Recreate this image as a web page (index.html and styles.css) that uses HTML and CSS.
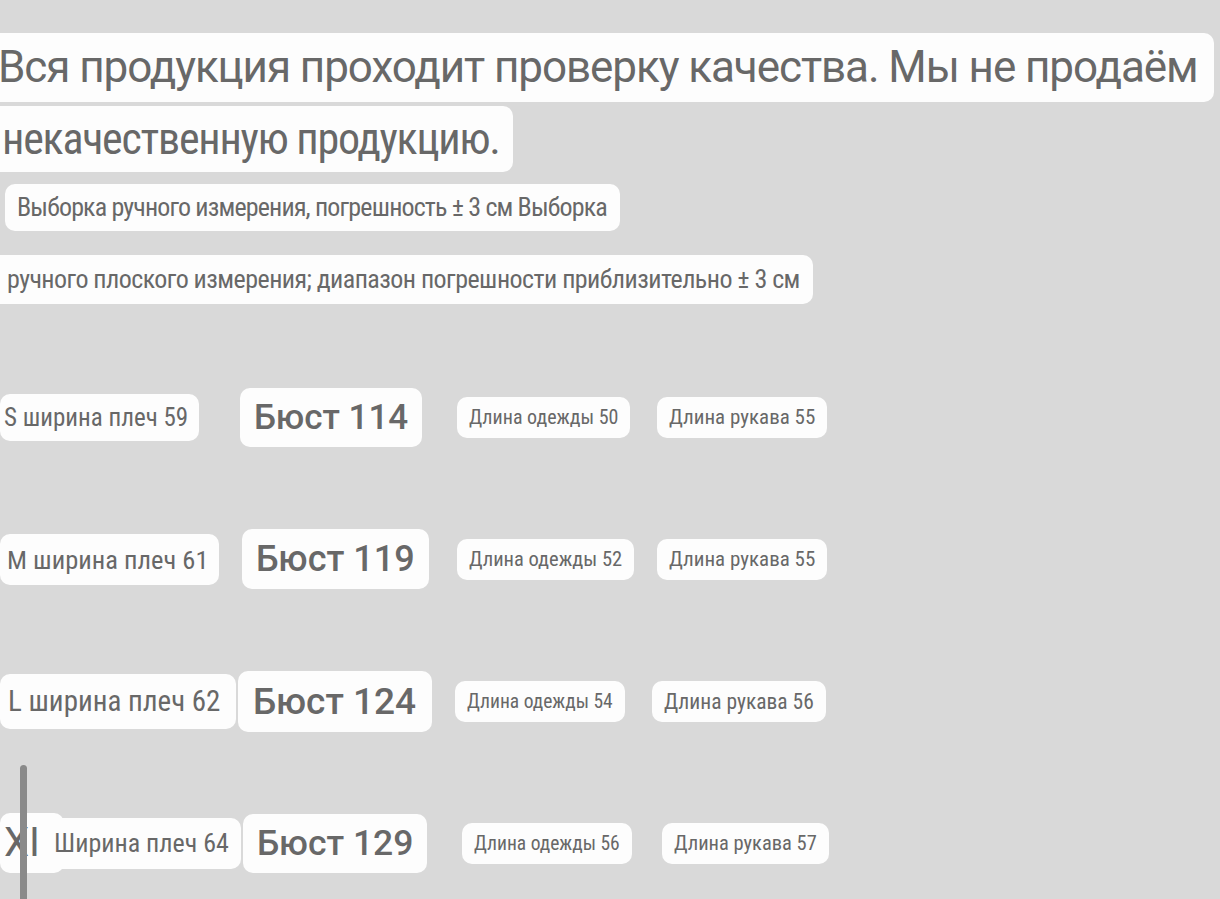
FILE: index.html
```html
<!DOCTYPE html>
<html lang="ru">
<head>
<meta charset="utf-8">
<title>Размеры</title>
<link rel="stylesheet" href="styles.css">
</head>
<body>
<main class="page">
  <section class="intro">
    <p class="headline">
      <span class="hl hl--first">Вся продукция проходит проверку качества. Мы не продаём</span>
      <span class="hl hl--second">некачественную продукцию.</span>
    </p>
    <p class="note note--first">Выборка ручного измерения, погрешность ± 3 см Выборка</p>
    <p class="note note--second">ручного плоского измерения; диапазон погрешности приблизительно ± 3 см</p>
  </section>

  <section class="sizes">
    <div class="size-row size-row--s">
      <span class="chip chip--label">S ширина плеч 59</span>
      <span class="chip chip--bust">Бюст 114</span>
      <span class="chip chip--len">Длина одежды 50</span>
      <span class="chip chip--sleeve">Длина рукава 55</span>
    </div>
    <div class="size-row size-row--m">
      <span class="chip chip--label">M ширина плеч 61</span>
      <span class="chip chip--bust">Бюст 119</span>
      <span class="chip chip--len">Длина одежды 52</span>
      <span class="chip chip--sleeve">Длина рукава 55</span>
    </div>
    <div class="size-row size-row--l">
      <span class="chip chip--label">L ширина плеч 62</span>
      <span class="chip chip--bust">Бюст 124</span>
      <span class="chip chip--len">Длина одежды 54</span>
      <span class="chip chip--sleeve">Длина рукава 56</span>
    </div>
    <div class="size-row size-row--xl">
      <span class="label-pair">
        <span class="chip chip--xl">XI</span>
        <span class="chip chip--label">Ширина плеч 64</span>
      </span>
      <span class="chip chip--bust">Бюст 129</span>
      <span class="chip chip--len">Длина одежды 56</span>
      <span class="chip chip--sleeve">Длина рукава 57</span>
    </div>
  </section>

  <span class="cursor" aria-hidden="true"></span>
</main>
</body>
</html>
```

FILE: styles.css
```css
* { box-sizing: border-box; }

html, body {
  margin: 0;
  padding: 0;
  width: 1220px;
  height: 899px;
  overflow: hidden;
  background: #d9d9d9;
}

.page {
  position: relative;
  width: 1220px;
  height: 899px;
  font-family: Roboto, "Noto Sans", "Liberation Sans", sans-serif;
  color: #686868;
  padding-top: 33px;
}

.intro {
  display: flex;
  flex-direction: column;
  align-items: flex-start;
}

.headline {
  margin: 0;
  display: flex;
  flex-direction: column;
  align-items: flex-start;
  gap: 4px;
}

.hl {
  display: block;
  background: #fdfdfd;
  border-radius: 10px;
  font-size: 44px;
  white-space: nowrap;
}

.hl--first {
  margin-left: -14px;
  padding: 0 16px 0 12px;
  height: 69px;
  line-height: 69px;
  letter-spacing: -1.07px;
}

.hl--second {
  margin-left: -14px;
  padding: 0 13px 0 16px;
  height: 66px;
  line-height: 66px;
  font-family: "Roboto Condensed", Roboto, sans-serif;
  font-stretch: condensed;
  letter-spacing: -1.25px;
}

.note {
  margin: 0;
  background: #fdfdfd;
  border-radius: 10px;
  font-family: "Roboto Condensed", "Liberation Sans Narrow", Roboto, sans-serif;
  font-stretch: condensed;
  font-size: 26px;
  white-space: nowrap;
}

.note--first {
  margin-top: 12px;
  margin-left: 5px;
  height: 47px;
  line-height: 47px;
  padding: 0 13px 0 12px;
  letter-spacing: -0.85px;
}

.note--second {
  margin-top: 24px;
  margin-left: -10px;
  height: 49px;
  line-height: 49px;
  padding: 0 13px 0 17px;
  letter-spacing: -0.55px;
}

.sizes {
  margin-top: 73px;
  display: grid;
  grid-template-columns: 240px 217px 200px auto;
  grid-auto-rows: 80px;
  row-gap: 62px;
}

.size-row {
  display: contents;
}

.size-row > * {
  align-self: center;
  justify-self: start;
}

.chip {
  display: inline-block;
  background: #fdfdfd;
  border-radius: 10px;
  white-space: nowrap;
  font-family: "Roboto Condensed", "Liberation Sans Narrow", Roboto, sans-serif;
  font-stretch: condensed;
}

.chip--label {
  font-size: 25px;
  height: 47px;
  line-height: 47px;
  padding: 0 11px 0 4px;
}

.chip--bust {
  font-family: Roboto, "Noto Sans", sans-serif;
  font-stretch: normal;
  font-weight: 500;
  font-size: 35px;
  height: 59px;
  line-height: 59px;
  padding: 0 14px;
}

.chip--len {
  font-size: 20px;
  height: 41px;
  line-height: 41px;
  padding: 0 12px;
}

.chip--sleeve {
  font-size: 21px;
  height: 41px;
  line-height: 41px;
  padding: 0 12px;
}

.size-row--m .chip--label { font-size: 26.5px; height: 51px; line-height: 51px; padding: 0 11px 0 7px; }
.size-row--l .chip--label { font-size: 29px; height: 55px; line-height: 55px; padding: 0 16px 0 8px; }

.size-row--m .chip--bust { margin-left: 2px; font-size: 36px; height: 60px; line-height: 60px; }
.size-row--l .chip--bust { margin-left: -2px; font-size: 37px; height: 61px; line-height: 61px; padding: 0 16px 0 15px; }
.size-row--xl .chip--bust { margin-left: 3px; font-size: 35.5px; height: 59px; line-height: 59px; }

.size-row--m .chip--len { font-size: 20.5px; }
.size-row--l .chip--len { margin-left: -2px; font-size: 19.5px; }
.size-row--l .chip--sleeve { margin-left: -5px; font-size: 21.5px; }
.size-row--xl .chip--len { margin-left: 5px; font-size: 19.5px; }
.size-row--xl .chip--sleeve { margin-left: 5px; font-size: 20.5px; }

.label-pair {
  display: flex;
  align-items: center;
}

.chip--xl {
  font-family: Roboto, sans-serif;
  font-stretch: normal;
  font-size: 40px;
  height: 60px;
  line-height: 60px;
  padding: 0 24px 0 4px;
}

.size-row--xl .chip--label {
  margin-left: -18px;
  font-size: 26px;
  height: 51px;
  line-height: 51px;
  padding: 0 12px 0 8px;
}

.cursor {
  position: absolute;
  left: 20px;
  top: 765px;
  width: 7px;
  height: 140px;
  background: #8a8a8a;
  border-radius: 4px 4px 0 0;
}
```
